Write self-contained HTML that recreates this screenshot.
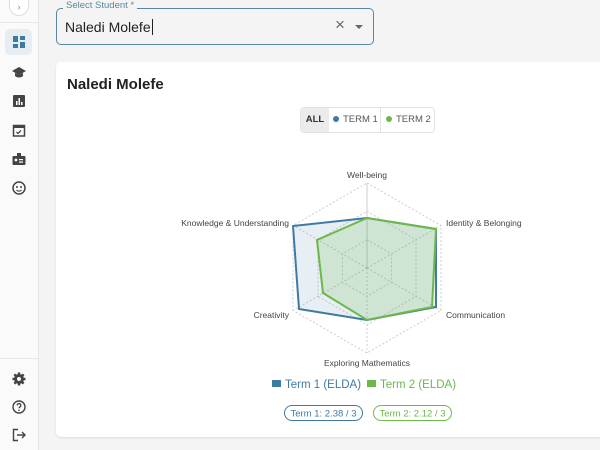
<!DOCTYPE html>
<html><head><style>
*{box-sizing:border-box;margin:0;padding:0}
body{width:600px;height:450px;overflow:hidden;background:#f4f4f4;font-family:"Liberation Sans",sans-serif;position:relative}
.side{position:absolute;left:0;top:0;width:39px;height:450px;background:#fafafa;border-right:1px solid #e6e6e6}
.ic{position:absolute;left:11px;width:16px;height:16px}
.inp{position:absolute;left:56px;top:8px;width:318px;height:37px;border:1.5px solid #5a87a0;border-radius:5px;background:#f4f4f4}
.card{position:absolute;left:56px;top:62px;width:560px;height:375px;background:#fff;border-radius:5px;box-shadow:0 1px 2px rgba(0,0,0,.1)}
</style></head><body>
<div class="side">
 <div style="position:absolute;left:9px;top:0;width:20px;height:16px;border:1px solid #ddd;border-top:none;border-radius:0 0 10px 10px;background:#fff;font-size:9px;color:#888;text-align:center;line-height:14px">›</div>
 <div style="position:absolute;left:0;top:22px;width:39px;border-top:1px solid #e6e6e6"></div>
 <div style="position:absolute;left:5px;top:29px;width:27px;height:26px;background:#e6eef3;border-radius:5px"></div>
 <svg class="ic" style="top:34px" viewBox="0 0 16 16"><g fill="#3f7aa3"><rect x="2" y="2" width="5" height="6"/><rect x="9" y="2" width="5" height="4"/><rect x="2" y="10" width="5" height="4"/><rect x="9" y="8" width="5" height="6"/></g></svg>
 <svg class="ic" style="top:64px" viewBox="0 0 16 16"><path d="M8 3L1 7l7 4 7-4z M4 9v3c2 2 6 2 8 0V9l-4 2z" fill="#444"/></svg>
 <svg class="ic" style="top:93px" viewBox="0 0 16 16"><rect x="2" y="2" width="12" height="12" rx="1" fill="#444"/><g fill="#fff"><rect x="5" y="8" width="1.5" height="4"/><rect x="7.5" y="5" width="1.5" height="7"/><rect x="10" y="9" width="1.5" height="3"/></g></svg>
 <svg class="ic" style="top:122px" viewBox="0 0 16 16"><rect x="2.5" y="3.5" width="11" height="10.5" fill="none" stroke="#444" stroke-width="1.5"/><rect x="2.5" y="3.5" width="11" height="2.5" fill="#444"/><path d="M5.5 10l1.5 1.5 3-3" stroke="#444" fill="none" stroke-width="1.3"/></svg>
 <svg class="ic" style="top:151px" viewBox="0 0 16 16"><rect x="1.5" y="5" width="13" height="9" rx="1" fill="#444"/><rect x="6" y="2" width="4" height="4" fill="#444"/><circle cx="5" cy="9" r="1.4" fill="#fff"/><rect x="8" y="8" width="4" height="1.2" fill="#fff"/><rect x="8" y="10.5" width="4" height="1.2" fill="#fff"/></svg>
 <svg class="ic" style="top:180px" viewBox="0 0 16 16"><circle cx="8" cy="8" r="6" fill="none" stroke="#444" stroke-width="1.5"/><circle cx="6" cy="7" r="1" fill="#444"/><circle cx="10" cy="7" r="1" fill="#444"/><path d="M5.5 10c1.5 1.5 3.5 1.5 5 0" stroke="#444" fill="none" stroke-width="1.2"/></svg>
 <div style="position:absolute;left:0;top:358px;width:39px;border-top:1px solid #e6e6e6"></div>
 <svg class="ic" style="top:371px" viewBox="0 0 16 16"><circle cx="8" cy="8" r="5" fill="#444"/><g stroke="#444" stroke-width="2.5"><path d="M8 1.5v13M1.5 8h13M3.4 3.4l9.2 9.2M12.6 3.4l-9.2 9.2"/></g><circle cx="8" cy="8" r="2" fill="#fafafa"/></svg>
 <svg class="ic" style="top:399px" viewBox="0 0 16 16"><circle cx="8" cy="8" r="6" fill="none" stroke="#444" stroke-width="1.4"/><path d="M6.2 6.4a1.8 1.8 0 1 1 2.6 1.6c-.6.3-.8.7-.8 1.3" fill="none" stroke="#444" stroke-width="1.3"/><circle cx="8" cy="11.3" r=".8" fill="#444"/></svg>
 <svg class="ic" style="top:427px" viewBox="0 0 16 16"><path d="M7 2.5H2.5v11H7" fill="none" stroke="#444" stroke-width="1.4"/><path d="M6 8h8M11 5l3 3-3 3" fill="none" stroke="#444" stroke-width="1.4"/></svg>
</div>
<div class="inp">
 <div style="position:absolute;left:6px;top:-9px;background:#f4f4f4;padding:0 3px;font-size:9.5px;color:#5a87a0">Select Student *</div>
 <div style="position:absolute;left:8px;top:10px;font-size:14px;color:#222">Naledi Molefe<span style="border-left:1px solid #222;margin-left:1px"></span></div>
 <div style="position:absolute;left:278px;top:6px;font-size:17px;color:#666">×</div>
 <div style="position:absolute;left:298px;top:16px;border-left:4px solid transparent;border-right:4px solid transparent;border-top:4px solid #666"></div>
</div>
<div class="card">
 <div style="position:absolute;left:11px;top:14px;font-size:15px;font-weight:bold;color:#222">Naledi Molefe</div>
 <div style="position:absolute;left:244px;top:45px;width:135px;height:26px;border:1px solid #e3e3e3;border-radius:4px;font-size:9.5px;color:#555;display:flex;white-space:nowrap">
  <div style="width:28px;background:#ebebeb;text-align:center;line-height:24px;font-weight:bold;color:#333">ALL</div>
  <div style="width:52px;border-right:1px solid #e3e3e3;line-height:24px;padding-left:4px"><span style="display:inline-block;width:6px;height:6px;border-radius:3px;background:#3f7aa3;margin-right:4px"></span>TERM 1</div>
  <div style="line-height:24px;padding-left:5px"><span style="display:inline-block;width:6px;height:6px;border-radius:3px;background:#6cb84a;margin-right:4px"></span>TERM 2</div>
 </div>
</div>
<svg style="position:absolute;left:0;top:0" width="600" height="450">
 <g fill="none" stroke="#ccc" stroke-dasharray="2,2" stroke-width="1">
  <polygon points="367,183 441,225.5 441,310.5 367,353 293,310.5 293,225.5"/>
  <polygon points="367,211.3 416,239.7 416,296.3 367,324.7 318,296.3 318,239.7"/>
  <polygon points="367,239.7 391.5,253.8 391.5,282.2 367,296.3 342.5,282.2 342.5,253.8"/>
  <path d="M367 268L441 225.5M367 268L441 310.5M367 268L367 353M367 268L293 310.5M367 268L293 225.5"/>
 </g>
 <line x1="367" y1="183" x2="367" y2="268" stroke="#ccc"/>
 <polygon points="367,218 436,229 436,307 367,320 299,309 293,226" fill="rgba(63,122,163,0.12)" stroke="#3f7aa3" stroke-width="2"/>
 <polygon points="367,218 436,229 432,307 367,320 323,293 317,240" fill="rgba(108,184,74,0.2)" stroke="#6cb84a" stroke-width="2"/>
 <g font-size="8.5" fill="#444" font-family="Liberation Sans,sans-serif">
  <text x="367" y="178" text-anchor="middle">Well-being</text>
  <text x="446" y="226">Identity &amp; Belonging</text>
  <text x="446" y="318">Communication</text>
  <text x="367" y="366" text-anchor="middle">Exploring Mathematics</text>
  <text x="289" y="318" text-anchor="end">Creativity</text>
  <text x="289" y="226" text-anchor="end">Knowledge &amp; Understanding</text>
 </g>
 <rect x="272" y="380" width="9" height="7" fill="#3f7aa3"/>
 <text x="285" y="388" font-size="11.5" fill="#3f7aa3" font-family="Liberation Sans,sans-serif">Term 1 (ELDA)</text>
 <rect x="367" y="380" width="9" height="7" fill="#6cb84a"/>
 <text x="380" y="388" font-size="11.5" fill="#6cb84a" font-family="Liberation Sans,sans-serif">Term 2 (ELDA)</text>
 <rect x="284.5" y="405.5" width="78" height="15" rx="7.5" fill="none" stroke="#3f7aa3"/>
 <text x="323.5" y="416.5" text-anchor="middle" font-size="9.5" fill="#3f7aa3" font-family="Liberation Sans,sans-serif">Term 1: 2.38 / 3</text>
 <rect x="373.5" y="405.5" width="78" height="15" rx="7.5" fill="none" stroke="#6cb84a"/>
 <text x="412.5" y="416.5" text-anchor="middle" font-size="9.5" fill="#6cb84a" font-family="Liberation Sans,sans-serif">Term 2: 2.12 / 3</text>
</svg>
</body></html>
